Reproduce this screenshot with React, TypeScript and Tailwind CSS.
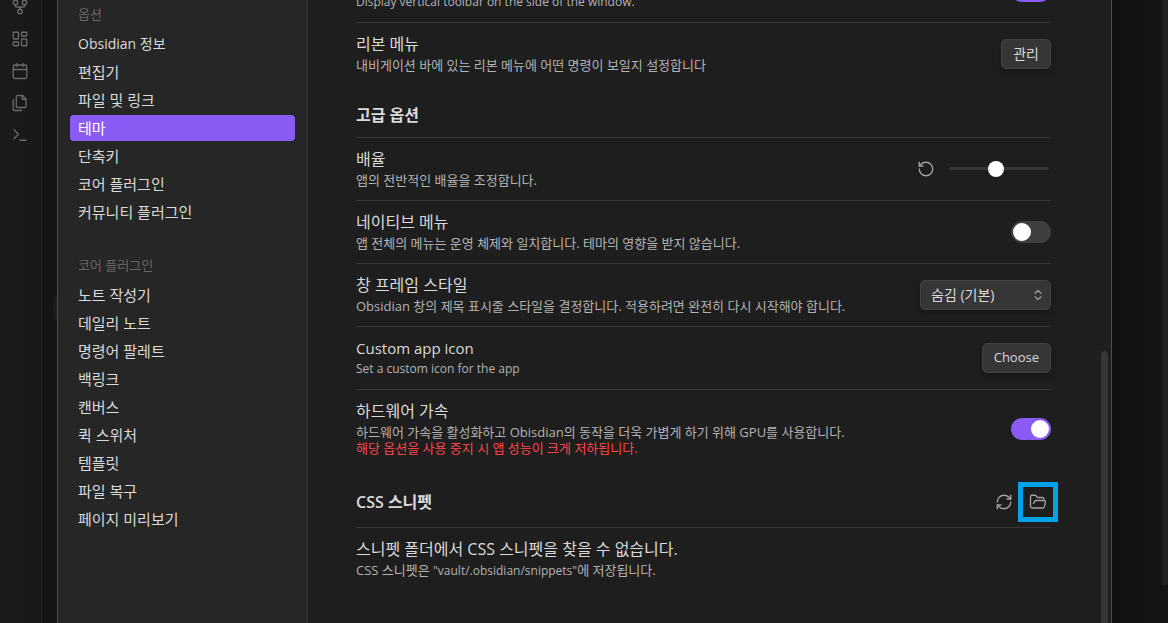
import { useState, type ReactNode } from "react";
import {
  Calendar,
  ChevronsUpDown,
  FolderOpen,
  GitFork,
  LayoutDashboard,
  RefreshCw,
  RotateCcw,
  Terminal,
} from "lucide-react";

function FilesIcon({ size, strokeWidth }: { size: number; strokeWidth: number }) {
  return (
    <svg
      width={size}
      height={size}
      viewBox="0 0 24 24"
      fill="none"
      stroke="currentColor"
      strokeWidth={strokeWidth}
      strokeLinecap="round"
      strokeLinejoin="round"
    >
      <path d="M15.5 2H8.6c-.4 0-.8.2-1.1.5-.3.3-.5.7-.5 1.1v12.8c0 .4.2.8.5 1.1.3.3.7.5 1.1.5h9.8c.4 0 .8-.2 1.1-.5.3-.3.5-.7.5-1.1V6.5L15.5 2z" />
      <path d="M3 7.6v12.8c0 .4.2.8.5 1.1.3.3.7.5 1.1.5h9.8" />
      <path d="M15 2v5h5" />
    </svg>
  );
}

const ribbonItems = [
  { label: "그래프 뷰", icon: GitFork },
  { label: "캔버스", icon: LayoutDashboard },
  { label: "데일리 노트", icon: Calendar },
  { label: "템플릿", icon: FilesIcon },
  { label: "명령어 팔레트", icon: Terminal },
];

const navGroups = [
  {
    title: "옵션",
    items: ["Obsidian 정보", "편집기", "파일 및 링크", "테마", "단축키", "코어 플러그인", "커뮤니티 플러그인"],
  },
  {
    title: "코어 플러그인",
    items: [
      "노트 작성기",
      "데일리 노트",
      "명령어 팔레트",
      "백링크",
      "캔버스",
      "퀵 스위처",
      "템플릿",
      "파일 복구",
      "페이지 미리보기",
    ],
  },
];

interface SettingRowProps {
  name: string;
  desc: ReactNode;
  // English strings are set one size down so they look level with the Hangul
  latin?: boolean;
  children?: ReactNode;
}

function SettingRow({ name, desc, latin, children }: SettingRowProps) {
  return (
    <div className="flex items-center justify-between gap-4 border-t border-[#363636] pt-[11px] pb-3">
      <div className="flex flex-col gap-[3px]">
        <div className={`text-[#dadada] ${latin ? "text-[15px] leading-5" : "text-base leading-5"}`}>{name}</div>
        <div className={`text-[#b3b3b3] ${latin ? "text-xs leading-4" : "text-[13px] leading-4"}`}>{desc}</div>
      </div>
      {children && <div className="flex shrink-0 items-center gap-2">{children}</div>}
    </div>
  );
}

function SectionHeading({ title, children }: { title: string; children?: ReactNode }) {
  return (
    <div className="flex items-center justify-between pt-[21px] pb-3">
      <h2 className="text-base leading-[19px] font-semibold text-[#dadada]">{title}</h2>
      {children && <div className="flex items-center gap-2">{children}</div>}
    </div>
  );
}

function Toggle({ label, defaultChecked }: { label: string; defaultChecked?: boolean }) {
  return (
    <input
      type="checkbox"
      role="switch"
      aria-label={label}
      defaultChecked={defaultChecked}
      className="flex h-[22px] w-10 cursor-pointer appearance-none items-center rounded-full bg-[#3f3f3f] px-0.5 before:size-[18px] before:rounded-full before:bg-white before:content-[''] checked:justify-end checked:bg-[#8a5cf5]"
    />
  );
}

function PushButton({ latin, children }: { latin?: boolean; children: ReactNode }) {
  return (
    <button
      className={`h-[30px] rounded-[5px] border border-[#424242] bg-[#363636] px-[11px] text-[#dadada] shadow-md shadow-black/20 hover:bg-[#3f3f3f] ${
        latin ? "text-[13px]" : "text-sm"
      }`}
    >
      {children}
    </button>
  );
}

function IconButton({ label, children }: { label: string; children: ReactNode }) {
  return (
    <button
      aria-label={label}
      className="flex size-[26px] items-center justify-center rounded text-[#a3a3a3] hover:bg-[#2e2e2e]"
    >
      {children}
    </button>
  );
}

export default function App() {
  const [active, setActive] = useState("옵션/테마");

  return (
    <div className="flex h-screen overflow-hidden bg-[#151515] font-['Open_Sans','Noto_Sans_CJK_KR',sans-serif]">
      <div className="flex w-[42px] shrink-0 flex-col items-center gap-3.5 border-r border-[#232323] bg-linear-to-r from-[#1b1b1b] to-[#181818] pr-0.5">
        {ribbonItems.map(({ label, icon: Icon }, i) => (
          <button key={label} aria-label={label} className={`text-[#6b6b6b] ${i === 0 ? "-mt-0.5" : ""}`}>
            <Icon size={18} strokeWidth={1.75} />
          </button>
        ))}
      </div>
      <div className="flex w-[15px] shrink-0 flex-col items-end bg-[#151515]">
        <div className="mt-[295px] h-[26px] w-1 rounded-l bg-[#1c1c1c]" />
      </div>

      {/* Settings modal */}
      <div className="flex min-w-0 flex-1 border-x border-[#4d4d4d] bg-[#1e1e1e]">
        <nav className="flex w-[250px] shrink-0 flex-col gap-8 border-r border-[#363636] bg-[#262626] px-3 pt-1.5">
          {navGroups.map((group) => (
            <div key={group.title}>
              <div className="mb-2 px-2 text-[13px] leading-[17px] text-[#666666]">{group.title}</div>
              <div className="flex flex-col gap-0.5">
                {group.items.map((item) => {
                  const id = `${group.title}/${item}`;
                  return (
                    <button
                      key={id}
                      onClick={() => setActive(id)}
                      className={`h-[26px] rounded px-2 text-left leading-5 ${
                        item.startsWith("Obsidian") ? "text-[14px]" : "text-[15px]"
                      } ${active === id ? "bg-[#8a5cf5] text-white" : "text-[#dadada] hover:bg-[#303030]"}`}
                    >
                      {item}
                    </button>
                  );
                })}
              </div>
            </div>
          ))}
        </nav>

        <main className="min-w-0 flex-1 overflow-hidden pr-[50px] pl-12">
          {/* Scrolled part of the list starts above the window */}
          <div className="-mt-[41px]">
            <SettingRow name="리본 표시" desc="Display vertical toolbar on the side of the window." latin>
              <Toggle label="리본 표시" defaultChecked />
            </SettingRow>
            <SettingRow name="리본 메뉴" desc="내비게이션 바에 있는 리본 메뉴에 어떤 명령이 보일지 설정합니다">
              <PushButton>관리</PushButton>
            </SettingRow>

            <SectionHeading title="고급 옵션" />
            <SettingRow name="배율" desc="앱의 전반적인 배율을 조정합니다.">
              <IconButton label="기본값 복원">
                <RotateCcw size={18} strokeWidth={1.75} />
              </IconButton>
              <input
                type="range"
                aria-label="배율"
                min={0}
                max={100}
                defaultValue={46}
                className="mx-0.5 h-[3px] w-[100px] appearance-none rounded-full bg-[#363636] [&::-webkit-slider-thumb]:size-4 [&::-webkit-slider-thumb]:appearance-none [&::-webkit-slider-thumb]:rounded-full [&::-webkit-slider-thumb]:bg-white"
              />
            </SettingRow>
            <SettingRow
              name="네이티브 메뉴"
              desc="앱 전체의 메뉴는 운영 체제와 일치합니다. 테마의 영향을 받지 않습니다."
            >
              <Toggle label="네이티브 메뉴" />
            </SettingRow>
            <SettingRow
              name="창 프레임 스타일"
              desc="Obsidian 창의 제목 표시줄 스타일을 결정합니다. 적용하려면 완전히 다시 시작해야 합니다."
            >
              <div className="relative">
                <select
                  aria-label="창 프레임 스타일"
                  className="h-[30px] w-[131px] appearance-none rounded-[5px] border border-[#424242] bg-[#363636] px-2.5 text-sm text-[#dadada] shadow-md shadow-black/20"
                >
                  <option>숨김 (기본)</option>
                  <option>Obsidian 프레임</option>
                  <option>기본 프레임</option>
                </select>
                <ChevronsUpDown
                  size={14}
                  strokeWidth={2}
                  className="pointer-events-none absolute top-2 right-1.5 text-[#a3a3a3]"
                />
              </div>
            </SettingRow>
            <SettingRow name="Custom app icon" desc="Set a custom icon for the app" latin>
              <PushButton latin>Choose</PushButton>
            </SettingRow>
            <SettingRow
              name="하드웨어 가속"
              desc={
                <>
                  <p>하드웨어 가속을 활성화하고 Obisdian의 동작을 더욱 가볍게 하기 위해 GPU를 사용합니다.</p>
                  <p className="text-[#fb464c]">해당 옵션을 사용 중지 시 앱 성능이 크게 저하됩니다.</p>
                </>
              }
            >
              <Toggle label="하드웨어 가속" defaultChecked />
            </SettingRow>

            <SectionHeading title="CSS 스니펫">
              <IconButton label="스니펫 새로고침">
                <RefreshCw size={18} strokeWidth={1.75} />
              </IconButton>
              <div className="relative">
                <IconButton label="스니펫 폴더 열기">
                  <FolderOpen size={18} strokeWidth={1.75} />
                </IconButton>
                <div className="pointer-events-none absolute -inset-[7px] border-[5px] border-[#00a2e8]" />
              </div>
            </SectionHeading>
            <SettingRow
              name="스니펫 폴더에서 CSS 스니펫을 찾을 수 없습니다."
              desc={
                <>
                  CSS 스니펫은 <span className="text-xs">"vault/.obsidian/snippets"</span>에 저장됩니다.
                </>
              }
            />
          </div>
        </main>
        <div className="flex w-[10px] shrink-0 flex-col">
          <div className="mt-[351px] w-[7px] flex-1 rounded-t bg-[#363636]" />
        </div>
      </div>

      <div className="flex w-14 shrink-0 justify-end bg-linear-to-r from-[#111111] to-[#151515]">
        <div className="h-[585px] w-1.5 rounded-b bg-[#212121]" />
      </div>
    </div>
  );
}
